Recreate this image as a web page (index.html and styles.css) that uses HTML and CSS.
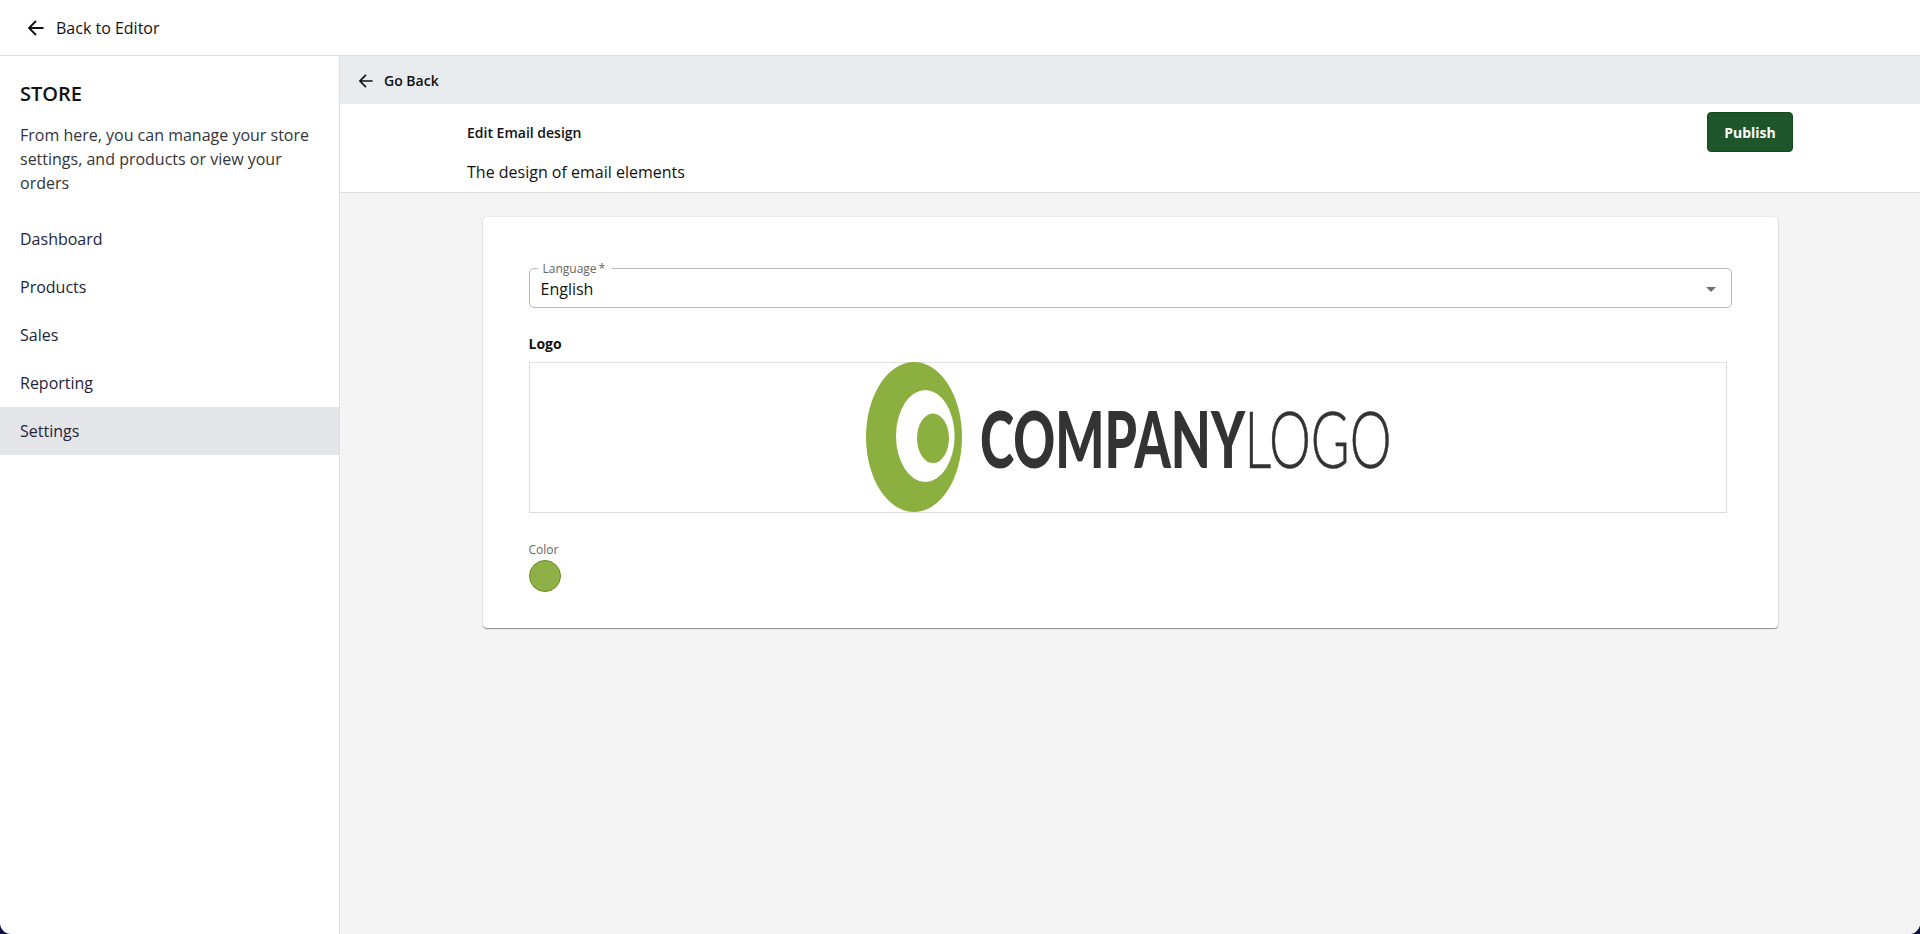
FILE: index.html
```
<!DOCTYPE html>
<html lang="en">
<head>
  <meta charset="UTF-8">
  <meta name="viewport" content="width=device-width, initial-scale=1.0">
  <title>Edit Email design</title>
  <link rel="stylesheet" href="styles.css">
</head>
<body>
  <div class="app">
    <header class="topbar">
      <a class="topbar-link">
        <svg class="icon-back" viewBox="0 0 16 16"><path d="M15.5 8H1.2M8 1 1 8l7 7"/></svg>
        <span>Back to Editor</span>
      </a>
    </header>

    <div class="layout">
      <aside class="sidebar">
        <h1>STORE</h1>
        <p class="sidebar-text">From here, you can manage your store settings, and products or view your orders</p>
        <nav class="menu">
          <a class="menu-item">Dashboard</a>
          <a class="menu-item">Products</a>
          <a class="menu-item">Sales</a>
          <a class="menu-item">Reporting</a>
          <a class="menu-item active">Settings</a>
        </nav>
      </aside>

      <main class="content">
        <div class="go-back">
          <svg class="icon-go" viewBox="0 0 16 16"><path d="M15.5 8H1.2M8 1 1 8l7 7"/></svg>
          <span>Go Back</span>
        </div>

        <div class="page-header">
          <div class="page-header-top">
            <h2>Edit Email design</h2>
            <button class="publish-btn" type="button">Publish</button>
          </div>
          <p class="page-subtitle">The design of email elements</p>
        </div>

        <section class="card">
          <fieldset class="select">
            <legend>Language<span class="required">*</span></legend>
            <div class="select-value">
              <span>English</span>
              <svg class="caret" viewBox="0 0 10 5"><path d="M0 0h10L5 5z"/></svg>
            </div>
          </fieldset>

          <h3>Logo</h3>
          <div class="logo-box">
            <svg class="logo" viewBox="0 0 524 150">
              <ellipse class="logo-green" cx="48" cy="75" rx="48" ry="75"/>
              <ellipse class="logo-white" cx="59.3" cy="74" rx="29.3" ry="46"/>
              <ellipse class="logo-green" cx="67" cy="76.3" rx="16" ry="24.8"/>
              <text y="106.4"><tspan class="logo-bold" x="114" textLength="265" lengthAdjust="spacingAndGlyphs">COMPANY</tspan><tspan class="logo-thin" x="378.5" textLength="147" lengthAdjust="spacingAndGlyphs">LOGO</tspan></text>
            </svg>
          </div>

          <div class="color-field">
            <span class="color-label">Color</span>
            <span class="color-swatch"></span>
          </div>
        </section>
      </main>
    </div>
  </div>
</body>
</html>
```
FILE: styles.css
```
:root {
  --green: #8cb040;
  --publish: #1f552a;
  --border-color: #dcdee0;
  --page-bg: #f4f4f4;
}

* {
  box-sizing: border-box;
}

body {
  font-family: 'Open Sans', 'Noto Sans', sans-serif;
  font-size: 16px;
  line-height: 24px;
  color: #111111;
  background-color: #0a0a4a;
  margin: 0;
}

h1, h2, h3, p {
  margin: 0;
}

.app {
  display: flex;
  flex-direction: column;
  height: 100vh;
  background-color: #ffffff;
  border-radius: 0 0 11px 11px;
  overflow: hidden;
}

/* Top bar */
.topbar {
  display: flex;
  align-items: center;
  height: 56px;
  padding-left: 28px;
  border-bottom: 1px solid var(--border-color);
}

.topbar-link {
  display: flex;
  align-items: center;
  gap: 12px;
}

.icon-back,
.icon-go {
  width: 16px;
  height: 16px;
  fill: none;
  stroke: #111111;
  stroke-width: 1.9;
}

.icon-go {
  width: 14px;
  height: 14px;
}

.layout {
  display: flex;
  flex: 1;
}

/* Sidebar */
.sidebar {
  width: 340px;
  padding-top: 24px;
  border-right: 1px solid var(--border-color);
}

.sidebar h1 {
  padding: 0 20px;
  font-size: 20px;
  font-weight: 600;
  line-height: 28px;
}

.sidebar-text {
  padding: 15px 20px 20px;
  color: #33343a;
}

.menu-item {
  display: block;
  height: 48px;
  padding: 0 20px;
  line-height: 48px;
  color: #23243a;
}

.menu-item.active {
  background-color: #e4e5e9;
}

/* Main area */
.content {
  flex: 1;
  background-color: var(--page-bg);
}

.go-back {
  display: flex;
  align-items: center;
  gap: 11px;
  height: 48px;
  padding-top: 1px;
  padding-left: 19px;
  font-size: 14px;
  font-weight: 600;
  background-color: #e8ecef;
}

.page-header {
  height: 89px;
  padding: 8px 127px;
  background-color: #ffffff;
  border-bottom: 1px solid var(--border-color);
}

.page-header-top {
  display: flex;
  align-items: center;
  justify-content: space-between;
}

.page-header h2 {
  padding-top: 2px;
  font-size: 14px;
  font-weight: 600;
}

.publish-btn {
  width: 86px;
  height: 40px;
  padding: 0;
  font-family: inherit;
  font-size: 14px;
  font-weight: 700;
  color: #ffffff;
  background-color: var(--publish);
  border: 1px solid #17491f;
  border-radius: 4px;
}

.page-subtitle {
  margin-top: 8px;
}

.card {
  height: 411px;
  margin: 24px 142.5px 0 142.5px;
  padding: 42px 46px;
  background-color: #ffffff;
  border-radius: 4px;
  box-shadow: 0 1px 1px rgba(0, 0, 0, 0.4), 0 0 2px rgba(0, 0, 0, 0.12);
}

.select {
  height: 49px;
  margin: 0;
  padding: 0 11px;
  border: 1px solid #b8b8b8;
  border-radius: 5px;
}

.select legend {
  height: 18px;
  padding: 0 7px 0 5px;
  margin-left: -3px;
  font-size: 12px;
  line-height: 20px;
  color: #666666;
}

.required {
  margin-left: 2px;
}

.select-value {
  display: flex;
  align-items: center;
  justify-content: space-between;
  padding-right: 4px;
}

.caret {
  width: 10px;
  height: 5px;
  fill: #707070;
}

.card h3 {
  margin-top: 24px;
  font-size: 14px;
  font-weight: 700;
}

.logo-box {
  display: flex;
  justify-content: center;
  width: 1198px;
  height: 151px;
  margin-top: 6px;
  border: 1px solid #dedede;
}

.logo {
  width: 524px;
  height: 150px;
  margin-top: -1px;
  overflow: visible;
}

.logo-green {
  fill: var(--green);
}

.logo-white {
  fill: #ffffff;
}

.logo-bold,
.logo-thin {
  font-family: Lato, sans-serif;
  font-size: 78px;
  fill: #333333;
}

.logo-bold {
  font-weight: 900;
}

.logo-thin {
  font-weight: 300;
  stroke: #333333;
  stroke-width: 0.6;
}

.color-field {
  display: flex;
  flex-direction: column;
  margin-top: 27px;
}

.color-label {
  font-size: 12px;
  line-height: 20px;
  color: #666666;
}

.color-swatch {
  width: 32px;
  height: 32px;
  background-color: #8fb046;
  border: 1px solid #6c8d22;
  border-radius: 50%;
}
```
